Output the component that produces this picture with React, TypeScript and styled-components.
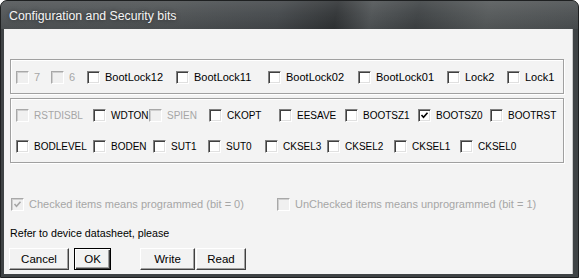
import * as React from 'react';
import styled, { createGlobalStyle } from 'styled-components';

const GlobalStyle = createGlobalStyle`
    html, body {
        margin: 0;
        padding: 0;
        background: #fff;
    }
    body {
        font-family: "Liberation Sans", Arial, sans-serif;
        font-size: 11px;
    }
`

const Window = styled.div`
    width: 579px;
    height: 278px;
    box-sizing: border-box;
    display: flex;
    flex-direction: column;
    border-radius: 7px 7px 0 0;
    background: #3f4345;
    border: 1px solid #1e2021;
    overflow: hidden;
`
const TitleBar = styled.div`
    height: 28px;
    flex: none;
    display: flex;
    align-items: center;
    padding-left: 8px;
    padding-top: 1px;
    box-sizing: border-box;
    color: #f4f4f4;
    font-size: 12.3px;
    text-shadow: 0 0 4px rgba(0, 0, 0, 0.6);
    background:
        linear-gradient(180deg, rgba(255,255,255,0.10) 0%, rgba(255,255,255,0.04) 45%, rgba(0,0,0,0.05) 100%),
        linear-gradient(100deg, #505456 0%, #4d5153 30%, #43474a 48%, #2f3234 58%, #4e5254 64%, #3d4143 72%, #545859 84%, #4a4e50 100%);
`
const Client = styled.div`
    flex: 1;
    margin: 0 5px 3px 3px;
    background: #f3f3f3;
    border-right: 1px solid #c8c8c8;
    padding: 30px 8px 4px 6px;
    display: flex;
    flex-direction: column;
`
const GroupBox = styled.div<{ $pt: number; $pb: number; $mt?: number }>`
    border: 1px solid #a0a0a0;
    box-shadow: inset 1px 1px 0 #fff, 1px 1px 0 #fff;
    padding: ${p => p.$pt}px 5px ${p => p.$pb}px 5px;
    margin-top: ${p => p.$mt || 0}px;
    display: flex;
    flex-direction: column;
    gap: 18px;
`
const Row = styled.div<{ $size?: number }>`
    display: flex;
    align-items: center;
    height: 13px;
    font-size: ${p => p.$size || 11}px;
`
const Item = styled.label<{ $w?: number; $disabled?: boolean }>`
    display: flex;
    align-items: center;
    flex: none;
    width: ${p => (p.$w ? `${p.$w}px` : 'auto')};
    color: ${p => (p.$disabled ? '#a6a6a6' : '#000')};
    white-space: nowrap;
    line-height: 13px;
`
const Box = styled.span<{ $disabled?: boolean }>`
    width: 13px;
    height: 13px;
    box-sizing: border-box;
    flex: none;
    margin-right: 5px;
    border: 1px solid;
    border-color: ${p => (p.$disabled ? '#a8a8a8 #fff #fff #a8a8a8' : '#808080 #fff #fff #808080')};
    box-shadow: ${p => (p.$disabled ? 'inset 1px 1px 0 #cfcfcf' : 'inset 1px 1px 0 #404040, inset -1px -1px 0 #e0e0e0')};
    background: ${p => (p.$disabled ? '#f0f0f0' : '#fff')};
    display: flex;
    align-items: center;
    justify-content: center;
`
const LegendRow = styled(Row)`
    margin-top: 35px;
    padding-left: 1px;
`
const Hint = styled.div`
    margin-top: 15px;
    line-height: 14px;
    font-size: 10.7px;
    color: #000;
`
const ButtonRow = styled.div`
    display: flex;
    margin-top: 8px;
    margin-left: -1px;
`
const Button = styled.button<{ $w: number; $ml?: number; $default?: boolean }>`
    width: ${p => p.$w}px;
    height: 22px;
    margin-left: ${p => p.$ml || 0}px;
    padding: 0;
    box-sizing: border-box;
    font-family: "Liberation Sans", Arial, sans-serif;
    font-size: 11.5px;
    color: #000;
    background: #f2f2f2;
    border: 1px solid;
    border-color: ${p => (p.$default ? '#000' : '#fff #404040 #404040 #fff')};
    box-shadow: ${p => (p.$default
        ? 'inset 1px 1px 0 #fff, inset -1px -1px 0 #404040, inset -2px -2px 0 #a0a0a0'
        : 'inset -1px -1px 0 #a0a0a0')};
`

const Check: React.FC<{ color: string }> = ({ color }) => (
    <svg width="9" height="9" viewBox="0 0 9 9">
        <path d="M1.5 4 L3.5 6.2 L7.5 1.8" fill="none" stroke={color} strokeWidth="1.6" />
    </svg>
)

interface Bit {
    name: string;
    w?: number;
    disabled?: boolean;
    checked?: boolean;
}

const lockBits: Bit[] = [
    { name: '7', w: 35, disabled: true },
    { name: '6', w: 36, disabled: true },
    { name: 'BootLock12', w: 89 },
    { name: 'BootLock11', w: 92 },
    { name: 'BootLock02', w: 90 },
    { name: 'BootLock01', w: 89 },
    { name: 'Lock2', w: 60 },
    { name: 'Lock1' },
]
const highFuses: Bit[] = [
    { name: 'RSTDISBL', w: 77, disabled: true },
    { name: 'WDTON', w: 56 },
    { name: 'SPIEN', w: 60, disabled: true },
    { name: 'CKOPT', w: 70 },
    { name: 'EESAVE', w: 66 },
    { name: 'BOOTSZ1', w: 73 },
    { name: 'BOOTSZ0', w: 72, checked: true },
    { name: 'BOOTRST' },
]
const lowFuses: Bit[] = [
    { name: 'BODLEVEL', w: 77 },
    { name: 'BODEN', w: 60 },
    { name: 'SUT1', w: 55 },
    { name: 'SUT0', w: 57 },
    { name: 'CKSEL3', w: 62 },
    { name: 'CKSEL2', w: 67 },
    { name: 'CKSEL1', w: 66 },
    { name: 'CKSEL0' },
]

const CheckItem: React.FC<{ bit: Bit }> = ({ bit }) => (
    <Item $w={bit.w} $disabled={bit.disabled}>
        <Box $disabled={bit.disabled}>
            {bit.checked && <Check color={bit.disabled ? '#a6a6a6' : '#000'} />}
        </Box>
        {bit.name}
    </Item>
)

const BitRow: React.FC<{ bits: Bit[]; size?: number }> = ({ bits, size }) => (
    <Row $size={size}>
        {bits.map(b => <CheckItem key={b.name} bit={b} />)}
    </Row>
)

export default function App() {
    return (
        <>
            <GlobalStyle />
            <Window>
                <TitleBar>Configuration and Security bits</TitleBar>
                <Client>
                    <GroupBox $pt={11} $pb={9}>
                        <BitRow bits={lockBits} />
                    </GroupBox>
                    <GroupBox $pt={10} $pb={9} $mt={4}>
                        <BitRow bits={highFuses} size={10} />
                        <BitRow bits={lowFuses} size={10} />
                    </GroupBox>
                    <LegendRow>
                        <CheckItem bit={{ name: 'Checked items means programmed (bit = 0)', w: 266, disabled: true, checked: true }} />
                        <CheckItem bit={{ name: 'UnChecked items means unprogrammed (bit = 1)', disabled: true }} />
                    </LegendRow>
                    <Hint>Refer to device datasheet, please</Hint>
                    <ButtonRow>
                        <Button $w={60}>Cancel</Button>
                        <Button $w={37} $ml={5} $default>OK</Button>
                        <Button $w={55} $ml={29}>Write</Button>
                        <Button $w={50} $ml={1}>Read</Button>
                    </ButtonRow>
                </Client>
            </Window>
        </>
    )
}
